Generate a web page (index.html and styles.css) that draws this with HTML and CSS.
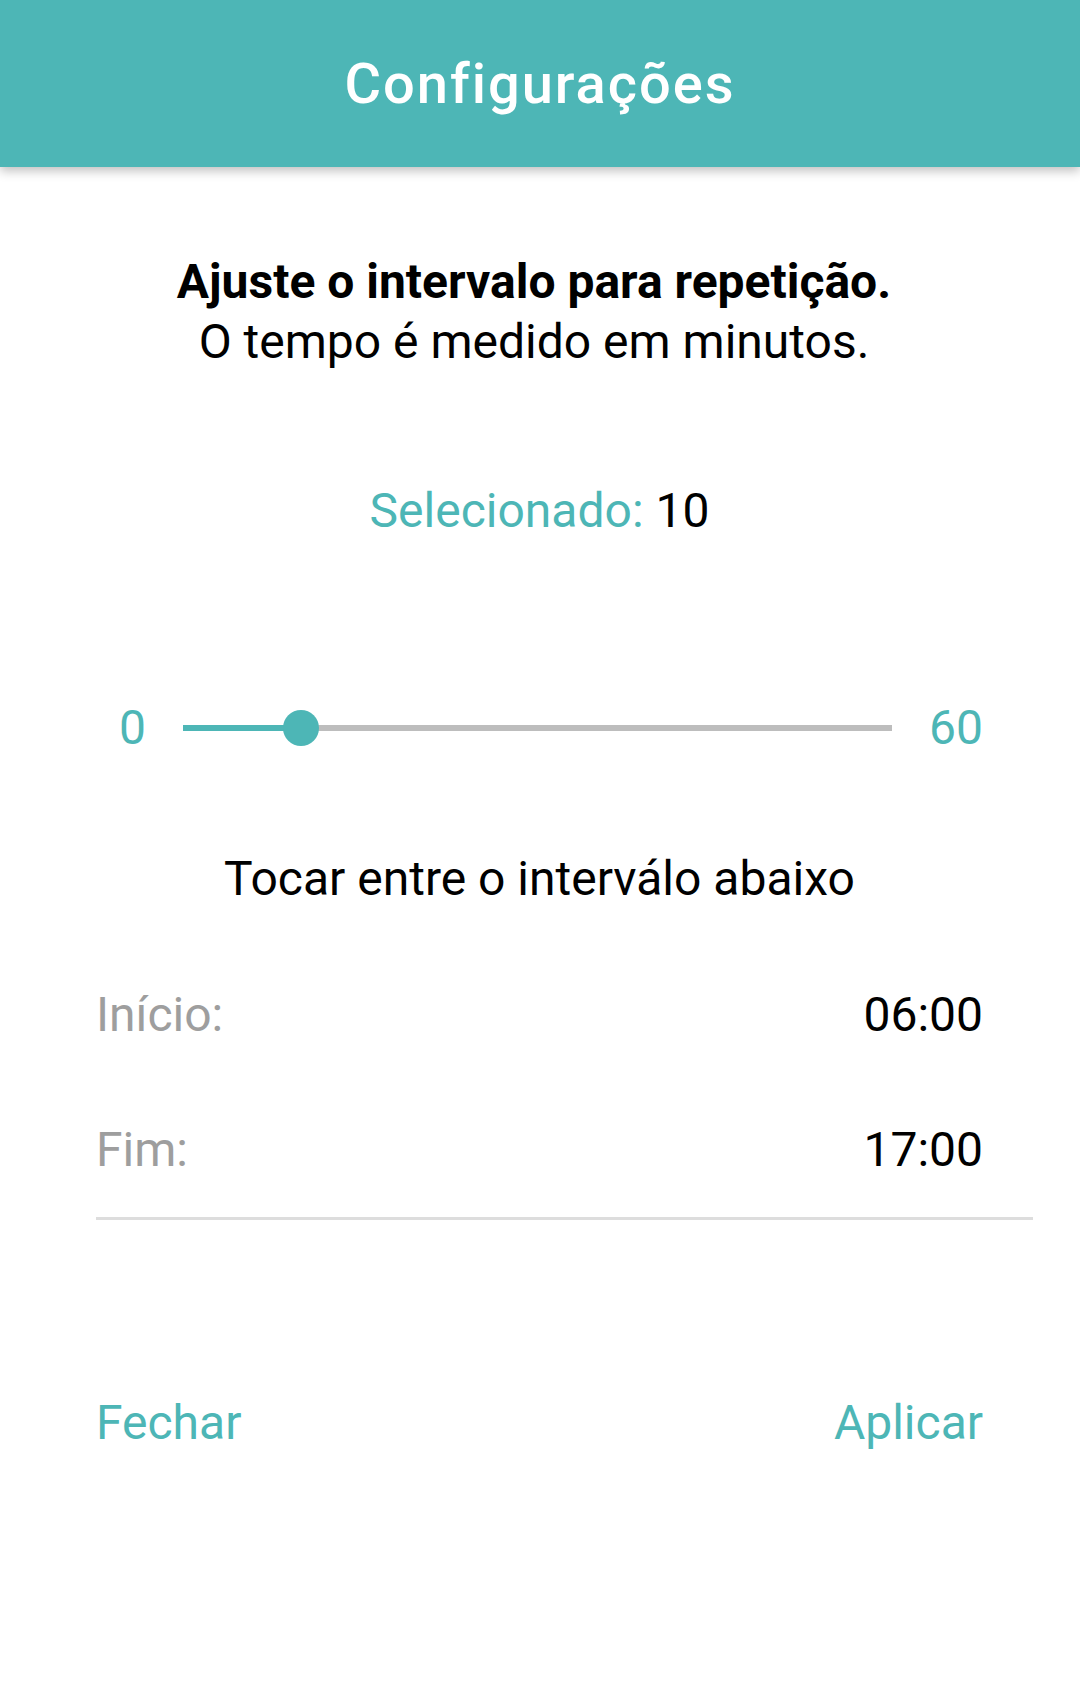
FILE: index.html
```html
<!DOCTYPE html>
<html lang="pt">
<head>
    <meta charset="UTF-8">
    <meta name="viewport" content="width=device-width, initial-scale=1.0">
    <title>Configurações</title>
    <link rel="stylesheet" href="styles.css">
</head>
<body>
    <header class="app-bar">
        <h1>Configurações</h1>
    </header>

    <main class="settings">
        <p class="intro">
            <strong>Ajuste o intervalo para repetição.</strong><br>
            O tempo é medido em minutos.
        </p>

        <p class="selected"><span class="selected-label">Selecionado:</span> 10</p>

        <div class="slider-row">
            <span class="slider-limit">0</span>
            <div class="slider-track">
                <div class="slider-fill" style="width: 16.67%"></div>
                <div class="slider-thumb" style="left: 16.67%"></div>
            </div>
            <span class="slider-limit">60</span>
        </div>

        <p class="range-title">Tocar entre o interválo abaixo</p>

        <div class="time-row time-row-first">
            <span class="time-label">Início:</span>
            <span class="time-value">06:00</span>
        </div>
        <div class="time-row">
            <span class="time-label">Fim:</span>
            <span class="time-value">17:00</span>
        </div>

        <hr class="divider">

        <div class="actions">
            <button type="button" class="text-button">Fechar</button>
            <button type="button" class="text-button">Aplicar</button>
        </div>
    </main>
</body>
</html>
```

FILE: styles.css
```css
body {
    margin: 0;
    font-family: Roboto, "Noto Sans", sans-serif;
    background-color: #fff;
    color: #000;
}

.app-bar {
    height: 167px;
    background-color: #4db6b6;
    box-shadow: 0 4px 10px rgba(0, 0, 0, 0.25);
    display: flex;
    align-items: center;
    justify-content: center;
}

.app-bar h1 {
    margin: 0;
    color: #fff;
    font-size: 56px;
    font-weight: 500;
    letter-spacing: 2px;
}

.settings {
    padding: 0 97px 0 96px;
    font-size: 48px;
    line-height: 56px;
}

.intro {
    margin: 85px 0 0;
    padding-right: 11px;
    text-align: center;
    line-height: 60px;
}

.intro strong {
    font-weight: 700;
}

.selected {
    margin: 111px 0 0;
    text-align: center;
}

.selected-label {
    color: #4db6b6;
}

.slider-row {
    margin-top: 161px;
    height: 56px;
    padding-left: 23px;
    display: flex;
    align-items: center;
    gap: 37px;
}

.slider-limit {
    color: #4db6b6;
}

.slider-track {
    position: relative;
    flex: 1;
    height: 6px;
    background-color: #bdbdbd;
}

.slider-fill {
    height: 100%;
    background-color: #4db6b6;
}

.slider-thumb {
    position: absolute;
    top: 50%;
    width: 36px;
    height: 36px;
    margin: -18px 0 0 -18px;
    border-radius: 50%;
    background-color: #4db6b6;
}

.range-title {
    margin: 95px 0 0;
    text-align: center;
}

.time-row {
    margin-top: 79px;
    display: flex;
    justify-content: space-between;
}

.time-row-first {
    margin-top: 80px;
}

.time-label {
    color: #9e9e9e;
}

.divider {
    margin: 39px -50px 0 0;
    height: 3px;
    border: none;
    background-color: #dddddd;
}

.actions {
    margin-top: 175px;
    display: flex;
    justify-content: space-between;
}

.text-button {
    padding: 0;
    border: none;
    background: none;
    color: #4db6b6;
    font-family: inherit;
    font-size: 48px;
    line-height: 56px;
    cursor: pointer;
}
```
